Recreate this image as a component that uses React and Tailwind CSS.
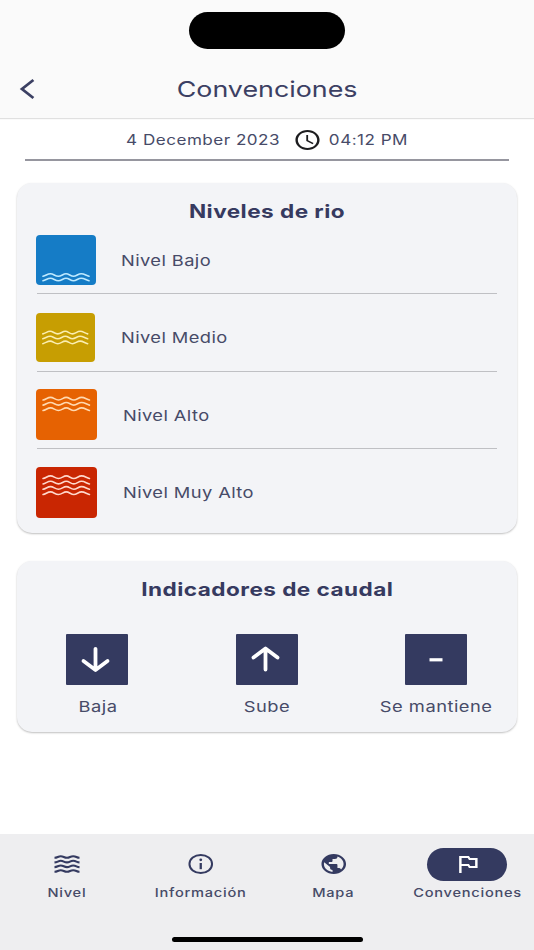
import React from "react";
import clsx from "clsx";
import { MdOutlinedFlag, MdPublic, MdSchedule } from "react-icons/md";

const levels = [
  { label: "Nivel Bajo", tile: "w-[60px] h-[50px] bg-[#157cc6]", text: "ml-[24.5px]", stroke: "#bfeaff", waves: [40, 44.5] },
  { label: "Nivel Medio", tile: "w-[58.5px] h-[49px] bg-[#c79e02]", text: "ml-[26px]", stroke: "#fbeeb0", waves: [20, 25, 30] },
  { label: "Nivel Alto", tile: "w-[60.5px] h-[51px] bg-[#e66202]", text: "ml-[26.5px]", stroke: "#ffd9b0", waves: [9.5, 14.5, 19.8] },
  { label: "Nivel Muy Alto", tile: "w-[60.5px] h-[51px] bg-[#c92602]", text: "ml-[26.5px]", stroke: "#ffd8cc", waves: [10, 15.3, 20.5, 25.7] },
];

const Wide = ({ className, children }) => (
  <span className={clsx("inline-block whitespace-nowrap scale-x-[1.22]", className)}>{children}</span>
);

const Wave = ({ y }) => (
  <path d={`M7 ${y + 1.3}C10 ${y + 0.6} 11.5 ${y - 1.3} 14.5 ${y - 1.3}S19 ${y + 1.3} 22.3 ${y + 1.3}S27 ${y - 1.3} 30 ${y - 1.3}S34.5 ${y + 1.3} 37.5 ${y + 1.3}S42 ${y - 1.3} 45.2 ${y - 1.3}S50 ${y + 0.6} 53 ${y + 1.3}`} />
);

const LevelTile = ({ tile, stroke, waves }) => (
  <div className={clsx("rounded-[4px] overflow-hidden", tile)}>
    <svg className="w-full h-full" viewBox="0 0 60 50" preserveAspectRatio="none" fill="none" stroke={stroke} strokeWidth="1.6" strokeLinecap="round">
      {waves.map((y) => (
        <Wave key={y} y={y} />
      ))}
    </svg>
  </div>
);

const Card = ({ title, className, children }) => (
  <section className={clsx("mx-[17px] rounded-[15px] bg-[#f3f4f7] shadow-[0_1px_2px_rgba(0,0,0,0.25)]", className)}>
    <h2 className="pt-[16px] h-[44px] text-center text-[18.5px] leading-6 font-bold text-[#363a60]">
      <Wide className="tracking-[0.37px]">{title}</Wide>
    </h2>
    {children}
  </section>
);

const Indicator = ({ label, children }) => (
  <div className="flex flex-col items-center w-[169.5px]">
    <div className="flex items-center justify-center w-[62px] h-[51px] rounded-[1px] bg-[#343a60]">
      <svg className="w-[62px] h-[51px]" viewBox="0 0 62 51" fill="none" stroke="#fff" strokeWidth="3.8" strokeLinecap="round" strokeLinejoin="round">
        {children}
      </svg>
    </div>
    <Wide className="ml-px mt-[10px] text-[15px] leading-6 tracking-[0.4px]">{label}</Wide>
  </div>
);

const WavesIcon = () => (
  <svg className="w-[26px] h-[20px]" viewBox="0 0 26 20" fill="none" stroke="currentColor" strokeWidth="2.1">
    {[3, 7.6, 12.3, 17].map((y) => (
      <path key={y} d={`M.5 ${y + 0.8}C3.5 ${y + 0.8} 4 ${y - 0.8} 6.8 ${y - 0.8}S10 ${y + 0.8} 13 ${y + 0.8}S16 ${y - 0.8} 19.2 ${y - 0.8}S22.5 ${y + 0.8} 25.5 ${y + 0.8}`} />
    ))}
  </svg>
);

const InfoIcon = () => (
  <svg className="w-[29.5px] h-[24px]" viewBox="0 0 29.5 24" fill="none" stroke="currentColor">
    <ellipse cx="14.75" cy="12" rx="11.3" ry="9.1" strokeWidth="2" />
    <path d="M14.75 11V17.2" strokeWidth="2.3" />
    <circle cx="14.75" cy="7.8" r="1.4" fill="currentColor" stroke="none" />
  </svg>
);

const NavItem = ({ label, active, children }) => (
  <div className="flex-1 flex flex-col items-center">
    <div className={clsx("flex items-center justify-center w-[80px] h-[33px] rounded-full", active ? "bg-[#343a60] text-white" : "text-[#343a60]")}>
      {children}
    </div>
    <Wide className="mt-[2px] text-[12px] leading-5 font-medium tracking-[0.6px]">{label}</Wide>
  </div>
);

const App = () => {
  return (
    <div className="flex flex-col w-[534px] h-[950px] overflow-hidden bg-white font-['Inter',sans-serif] text-[#474b68]">
      <header className="h-[117.5px] shrink-0 bg-[#fafafa] shadow-[0_1px_1px_rgba(0,0,0,0.12)]">
        <div className="mx-auto pt-[11.5px] w-[156px]">
          <div className="h-[37.5px] rounded-full bg-black" />
        </div>
        <div className="grid grid-cols-[60px_1fr_60px] items-center mt-[24px] h-[32px] text-[#3c4063]">
          <svg className="ml-[19px] w-[18px] h-[22px]" viewBox="0 0 18 22" fill="none" stroke="currentColor" strokeWidth="2.8">
            <path d="M14.4 2L3 11L14.4 20" />
          </svg>
          <h1 className="text-center text-[22px] leading-8">
            <Wide>Convenciones</Wide>
          </h1>
        </div>
      </header>

      <div className="flex items-center justify-center mx-[25px] pt-[2.5px] h-[43.5px] shrink-0 border-b-2 border-[#96969f] text-[14px]">
        <div className="w-[153px] text-center">
          <Wide className="tracking-[0.4px]">4 December 2023</Wide>
        </div>
        <MdSchedule className="ml-[13px] mr-[7px] w-[29px] h-[24px] text-[#1d1d1f]" preserveAspectRatio="none" />
        <div className="w-[79px] text-center">
          <Wide className="tracking-[0.4px]">04:12 PM</Wide>
        </div>
      </div>

      <Card title="Niveles de rio" className="mt-[21.5px] h-[350.5px] shrink-0">
        <div className="mx-[19px]">
          {levels.map((item, i) => (
            <div key={item.label} className={clsx("relative flex items-center h-[77.5px]", i === 0 && "-mt-[5.5px]")}>
              <LevelTile {...item} />
              <Wide className={clsx("origin-left pt-[2px] text-[15px] tracking-[0.33px]", item.text)}>{item.label}</Wide>
              {i < levels.length - 1 && <div className="absolute bottom-[4.5px] left-[1px] right-[1px] h-px bg-[#bfc0c4]" />}
            </div>
          ))}
        </div>
      </Card>

      <Card title="Indicadores de caudal" className="mt-[28px] h-[171px] shrink-0">
        <div className="flex justify-center mt-[28.5px] -ml-[5.5px] -mr-[4.5px]">
          <Indicator label="Baja">
            <path d="M29.5 14.8V35.5M17.5 27L29.5 36L41.5 27" />
          </Indicator>
          <Indicator label="Sube">
            <path d="M29.5 35.5V14.8M17.5 23.5L29.5 14.5L41.5 23.5" />
          </Indicator>
          <Indicator label="Se mantiene">
            <path d="M24.5 25.8H37.5" strokeLinecap="butt" strokeWidth="3.2" />
          </Indicator>
        </div>
      </Card>

      <nav className="flex flex-col mt-auto h-[116.5px] shrink-0 bg-[#eeeef0]">
        <div className="flex pt-[14px]">
          <NavItem label="Nivel">
            <WavesIcon />
          </NavItem>
          <NavItem label="Información">
            <InfoIcon />
          </NavItem>
          <NavItem label="Mapa">
            <MdPublic className="w-[29.5px] h-[24px]" preserveAspectRatio="none" />
          </NavItem>
          <NavItem label="Convenciones" active>
            <MdOutlinedFlag className="ml-px w-[29.5px] h-[24px]" preserveAspectRatio="none" />
          </NavItem>
        </div>
        <div className="mx-auto mt-auto mb-[8px] w-[191px] h-[5px] rounded-full bg-black" />
      </nav>
    </div>
  );
};

export default App;
